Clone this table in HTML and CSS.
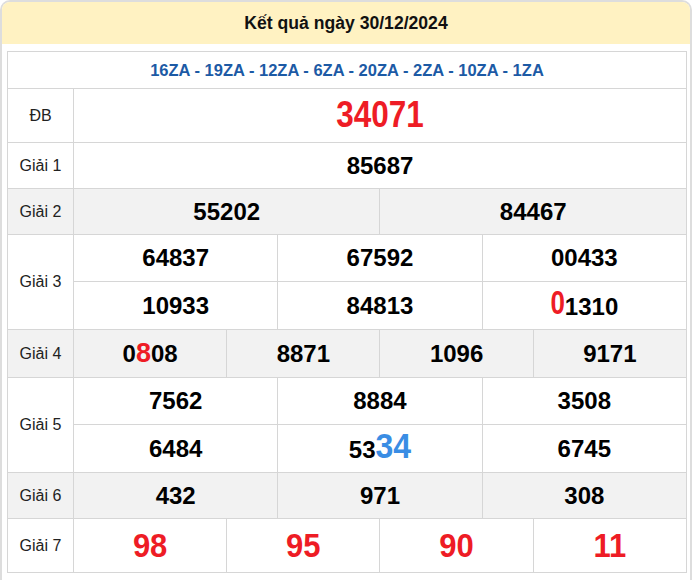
FILE: index.html
```html
<!DOCTYPE html>
<html lang="vi">
<head>
<meta charset="utf-8">
<link rel="stylesheet" href="styles.css">
</head>
<body>
<div class="box">
  <div class="head">Kết quả ngày 30/12/2024</div>
  <div class="content">
    <table class="kq">
      <colgroup>
        <col class="c-label">
        <col span="12" class="c-num">
      </colgroup>
      <tr class="r-code"><td colspan="13" class="codes">16ZA - 19ZA - 12ZA - 6ZA - 20ZA - 2ZA - 10ZA - 1ZA</td></tr>
      <tr class="r-db"><td class="label">ĐB</td><td colspan="12" class="num"><span class="db">34071</span></td></tr>
      <tr class="r-46"><td class="label">Giải 1</td><td colspan="12" class="num">85687</td></tr>
      <tr class="r-46 grey"><td class="label">Giải 2</td><td colspan="6" class="num">55202</td><td colspan="6" class="num">84467</td></tr>
      <tr class="r-47"><td class="label" rowspan="2">Giải 3</td><td colspan="4" class="num">64837</td><td colspan="4" class="num">67592</td><td colspan="4" class="num">00433</td></tr>
      <tr class="r-48"><td colspan="4" class="num">10933</td><td colspan="4" class="num">84813</td><td colspan="4" class="num"><span class="hl-red hl-0">0</span>1310</td></tr>
      <tr class="r-48 grey"><td class="label">Giải 4</td><td colspan="3" class="num">0<span class="hl-red hl-8">8</span>08</td><td colspan="3" class="num">8871</td><td colspan="3" class="num">1096</td><td colspan="3" class="num">9171</td></tr>
      <tr class="r-47"><td class="label" rowspan="2">Giải 5</td><td colspan="4" class="num">7562</td><td colspan="4" class="num">8884</td><td colspan="4" class="num">3508</td></tr>
      <tr class="r-48"><td colspan="4" class="num">6484</td><td colspan="4" class="num">53<span class="hl-blue">34</span></td><td colspan="4" class="num">6745</td></tr>
      <tr class="r-46 grey"><td class="label">Giải 6</td><td colspan="4" class="num">432</td><td colspan="4" class="num">971</td><td colspan="4" class="num">308</td></tr>
      <tr class="r-db"><td class="label">Giải 7</td><td colspan="3" class="num"><span class="g7">98</span></td><td colspan="3" class="num"><span class="g7">95</span></td><td colspan="3" class="num"><span class="g7">90</span></td><td colspan="3" class="num"><span class="g7">11</span></td></tr>
    </table>
  </div>
</div>
</body>
</html>
```

FILE: styles.css
```css
html, body {
  margin: 0;
  padding: 0;
  background: #ffffff;
}

body {
  font-family: "Liberation Sans", Arial, sans-serif;
  color: #000;
}

.box {
  width: 688px;
  border: 2px solid #dddddd;
  border-bottom: none;
  border-radius: 10px 10px 0 0;
  background: #fff;
  min-height: 578px;
}

.head {
  height: 42px;
  background: #fff2c2;
  border-radius: 8px 8px 0 0;
  display: flex;
  align-items: center;
  justify-content: center;
  font-weight: bold;
  font-size: 17.6px;
  color: #111;
}

.content {
  padding: 7px 3px 8px 5px;
}

.kq {
  width: 680px;
  border-collapse: collapse;
  table-layout: fixed;
}

.c-label {
  width: 66px;
}

.kq td {
  border: 1px solid #d6d6d6;
  padding: 0;
  text-align: center;
  vertical-align: middle;
}

.r-code { height: 37px; }
.r-db { height: 54px; }
.r-46 { height: 46px; }
.r-47 { height: 47px; }
.r-48 { height: 48px; }

.grey td {
  background: #f2f2f2;
}

.codes {
  font-size: 16.5px;
  font-weight: bold;
  color: #1c5aa5;
}

.label {
  font-size: 16px;
  color: #222;
}

.num {
  font-size: 24px;
  font-weight: bold;
  color: #000;
  line-height: 1;
}

.db {
  display: inline-block;
  font-size: 31.5px;
  color: #ee1c25;
  transform: scaleY(1.15);
  transform-origin: 50% 60%;
}

.g7 {
  display: inline-block;
  font-size: 31px;
  color: #ee1c25;
  transform: scaleY(1.05);
}

.hl-red {
  display: inline-block;
  color: #ee1c25;
  transform-origin: 50% 100%;
}

.hl-8 {
  font-size: 27px;
}

.hl-0 {
  font-size: 26px;
  transform: scaleY(1.25);
}

.hl-blue {
  display: inline-block;
  color: #3a8de4;
  font-size: 32px;
  line-height: 24px;
  transform: scaleY(1.08);
  transform-origin: 50% 100%;
}
```
